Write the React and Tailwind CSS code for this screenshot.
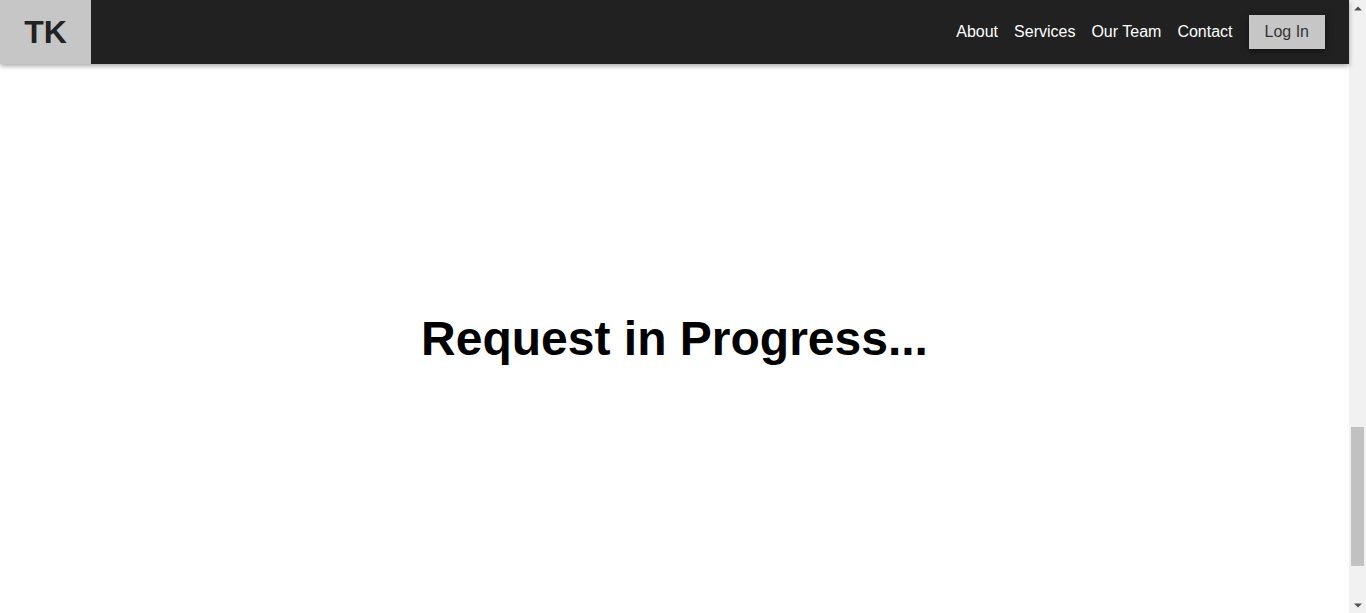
import React from "react";

function Scrollbar() {
  return (
    <div className="w-[17px] shrink-0 h-screen bg-[#f1f1f1] flex flex-col items-center">
      <div className="h-[17px] w-full flex items-center justify-center">
        <svg width="8" height="5" viewBox="0 0 8 5" className="mt-[-1px]">
          <polygon points="0,4.5 4,0.5 8,4.5" fill="#505050" />
        </svg>
      </div>
      <div className="flex-1 w-full flex flex-col items-center">
        <div className="h-[410px] shrink-0" />
        <div className="h-[139px] w-[13px] bg-[#c1c1c1]" />
      </div>
      <div className="h-[17px] w-full flex items-center justify-center">
        <svg width="8" height="5" viewBox="0 0 8 5" className="mt-[1px]">
          <polygon points="0,0.5 8,0.5 4,4.5" fill="#505050" />
        </svg>
      </div>
    </div>
  );
}

export default function App() {
  return (
    <div
      className="h-screen w-full flex bg-white text-black overflow-hidden"
      style={{ fontFamily: '"Liberation Sans", Arial, Helvetica, sans-serif' }}
    >
      <div className="flex-1 flex flex-col min-w-0">
        <nav className="relative z-10 h-16 shrink-0 bg-[#212121] flex items-center justify-between shadow-[0_2px_5px_rgba(0,0,0,0.35)]">
          <div className="h-16 w-[91px] bg-[#c6c6c6] flex items-center justify-center text-[32px] font-bold text-[#222222] leading-none">
            TK
          </div>
          <div className="flex items-center gap-4 pr-6 text-base text-white">
            <a className="leading-5">About</a>
            <a className="leading-5">Services</a>
            <a className="leading-5">Our Team</a>
            <a className="leading-5">Contact</a>
            <button className="bg-[#c6c6c6] text-[#333333] px-4 py-[7px] leading-5 text-base shadow-[0_2px_6px_rgba(0,0,0,0.5)]">
              Log In
            </button>
          </div>
        </nav>
        <main className="flex-1 flex items-center justify-center">
          <h1 className="text-5xl leading-none font-bold">Request in Progress...</h1>
        </main>
      </div>
      <Scrollbar />
    </div>
  );
}
